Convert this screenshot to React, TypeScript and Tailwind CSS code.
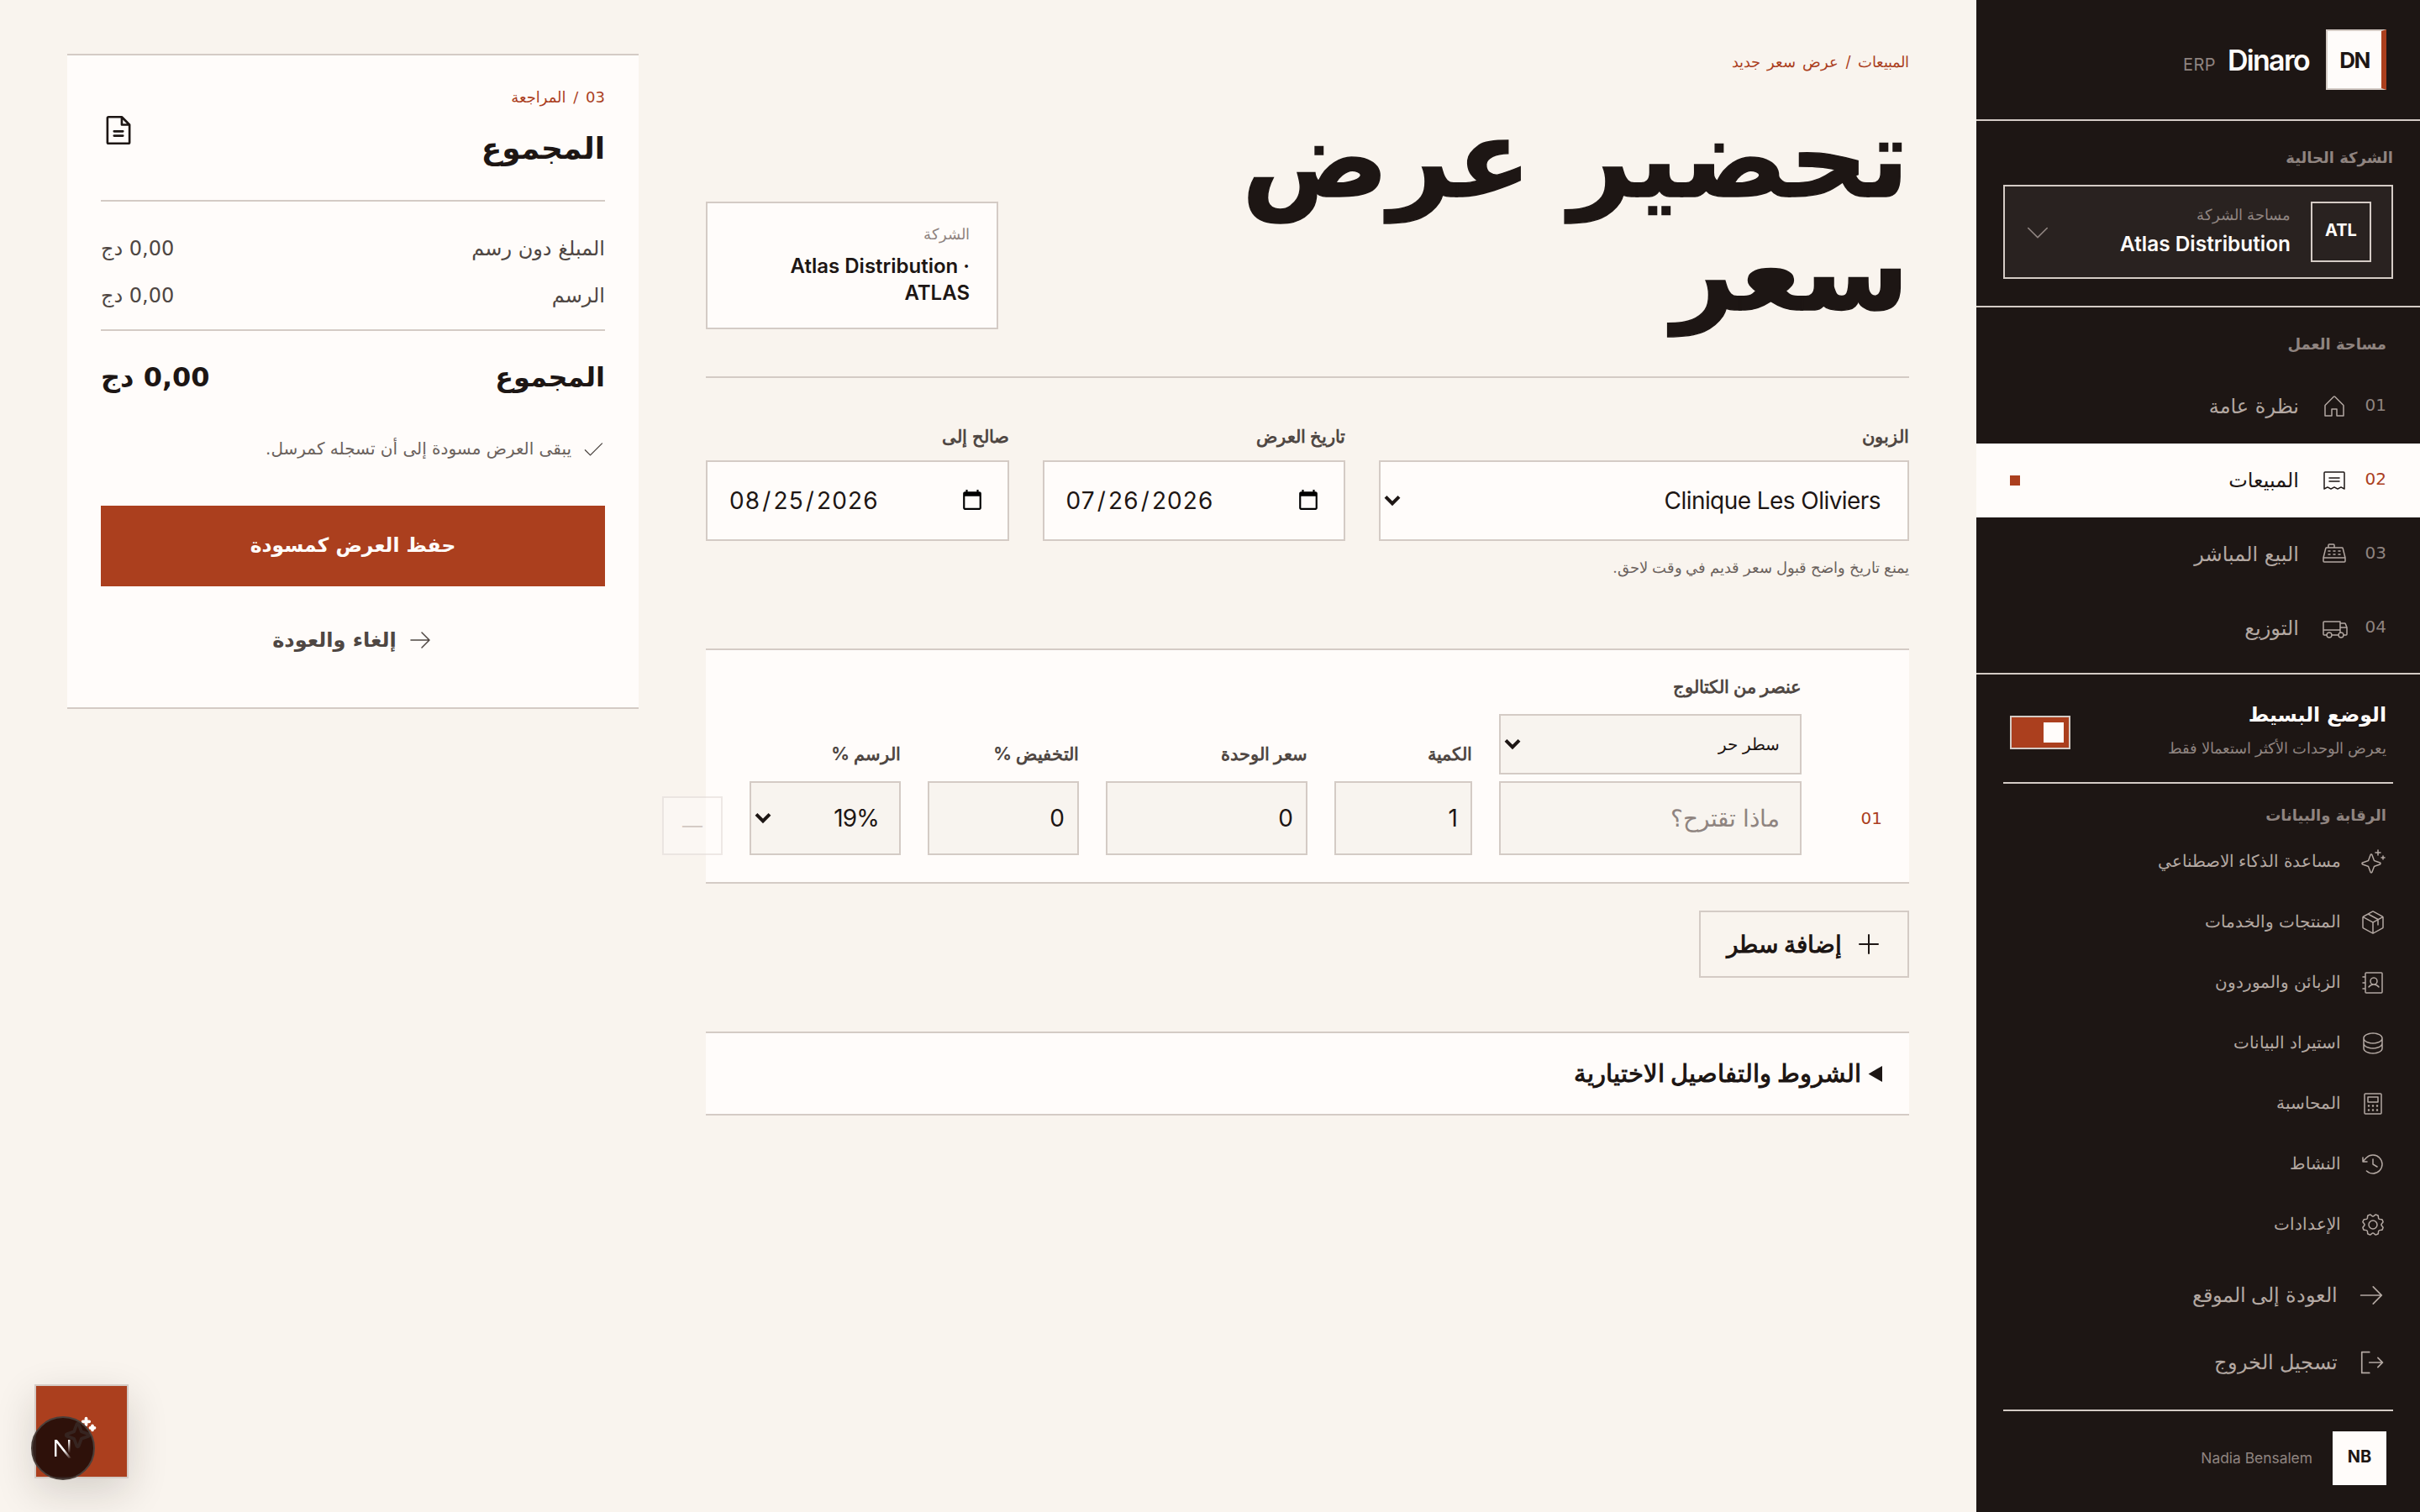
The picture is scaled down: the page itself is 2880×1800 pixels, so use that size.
import {
  PiHouseLight, PiReceiptLight, PiCashRegisterLight, PiTruckLight, PiSparkleLight, PiSparkleBold, PiPackageLight,
  PiAddressBookLight, PiDatabaseLight, PiCalculatorLight, PiClockCounterClockwiseLight, PiGearLight,
  PiArrowRightLight, PiSignOutLight, PiCaretDownLight, PiFileText, PiCheckLight, PiPlus,
} from "react-icons/pi";

const dv = "font-['DejaVu_Sans',sans-serif]";
const fieldLabel = "block text-[10.7px] leading-[13px] font-bold text-[#4f4743] mb-[8px]";
const rowLabel = "block text-[10.7px] leading-[13px] font-bold text-[#4f4743] mb-[10px]";
const topBase = "w-full h-[48px] border border-[#d4cbc5] bg-[#fffcfa] text-[#1d1614] text-[14px]";
const rowField = "w-full h-[44px] border border-[#d4cbc5] bg-[#f8f4ef] text-[#1d1614] text-[14px] tracking-[-0.03em]";

const nav = [
  { n: "01", t: "نظرة عامة", I: PiHouseLight },
  { n: "02", t: "المبيعات", I: PiReceiptLight, active: true },
  { n: "03", t: "البيع المباشر", I: PiCashRegisterLight },
  { n: "04", t: "التوزيع", I: PiTruckLight },
];
const lower = [
  { t: "مساعدة الذكاء الاصطناعي", I: PiSparkleLight },
  { t: "المنتجات والخدمات", I: PiPackageLight },
  { t: "الزبائن والموردون", I: PiAddressBookLight },
  { t: "استيراد البيانات", I: PiDatabaseLight },
  { t: "المحاسبة", I: PiCalculatorLight },
  { t: "النشاط", I: PiClockCounterClockwiseLight },
  { t: "الإعدادات", I: PiGearLight },
];

function Sel({ className, label }: { className: string; label: string }) {
  return (
    <div className="relative">
      <select className={`appearance-none ${className}`}><option>{label}</option></select>
      <svg className="absolute left-[3px] top-1/2 -translate-y-1/2 pointer-events-none" width="10" height="7" viewBox="0 0 10 7" fill="none">
        <path d="M1 1.2 5 5.2 9 1.2" stroke="#1d1614" strokeWidth="2" />
      </svg>
    </div>
  );
}

function Sidebar() {
  return (
    <aside className="w-[264px] h-[900px] shrink-0 bg-[#1d1614] flex flex-col text-[#b3a8a2]">
      <div className="h-[72px] shrink-0 border-b border-[#d4cbc5] flex items-center gap-[10px] pr-[20px]">
        <div className="w-[36px] h-[36px] border border-[#d4cbc5] bg-[#fffcfa] border-r-[3px] border-r-[#ab3f1e] flex items-center justify-center">
          <span dir="ltr" className="text-[13px] font-bold tracking-[-0.06em] text-[#1d1614]">DN</span>
        </div>
        <div dir="ltr" className="flex items-baseline gap-[7px] flex-row-reverse">
          <span className="text-[17px] font-semibold tracking-[-0.05em] text-[#fffcfa]">Dinaro</span>
          <span className="text-[10px] tracking-[0.02em] text-[#8f8480]">ERP</span>
        </div>
      </div>

      <div className="h-[111px] shrink-0 border-b border-[#d4cbc5] px-[16px] pt-[16px]">
        <div className={`${dv} text-[9px] leading-[12px] font-bold text-[#8f8480] mb-[10px]`}>الشركة الحالية</div>
        <div className="h-[56px] border border-[#d4cbc5] bg-[#292220] flex items-center pr-[12px] pl-[10.5px]">
          <div className="w-[36px] h-[36px] border border-[#d4cbc5] flex items-center justify-center shrink-0">
            <span className="text-[10px] font-bold text-[#fffcfa] -translate-y-[1px]">ATL</span>
          </div>
          <div className="flex-1 mr-[12px] min-w-0">
            <div className="text-[8.8px] leading-[14px] text-[#8f8480] -translate-y-[1px]">مساحة الشركة</div>
            <div className="text-[12.2px] leading-[18px] font-semibold text-[#fffcfa]">Atlas Distribution</div>
          </div>
          <PiCaretDownLight size={18} className="text-[#8f8480]" />
        </div>
      </div>

      <div className="h-[37px] shrink-0 flex items-end pr-[20px] pb-[9px]">
        <div className={`${dv} text-[9px] leading-[12px] font-bold text-[#8f8480]`}>مساحة العمل</div>
      </div>
      <nav className="shrink-0">
        {nav.map(({ n, t, I, active }) => (
          <div key={n} className={`h-[44px] flex items-center px-[20px] ${dv} ${active ? "bg-[#fffcfa] text-[#1d1614]" : ""}`}>
            <span className={`w-[11px] text-[10px] leading-[12px] -translate-y-[1px] ${active ? "text-[#ab3f1e]" : "text-[#8f8480]"}`}>{n}</span>
            <I size={16} className="mr-[12px] shrink-0" />
            <span className="mr-[13px] text-[12px]">{t}</span>
            {active && <span className="mr-auto w-[6px] h-[6px] bg-[#ab3f1e]" />}
          </div>
        ))}
      </nav>

      <div className="mt-[4.5px] border-t border-[#d4cbc5] h-[65px] shrink-0 flex items-start justify-between pr-[20px] pl-[20px] pt-[15px]">
        <div>
          <div className={`${dv} text-[11.8px] leading-[18px] font-bold text-[#fffcfa]`}>الوضع البسيط</div>
          <div className="text-[8.8px] leading-[14px] mt-[4px] text-[#8f8480]">يعرض الوحدات الأكثر استعمالا فقط</div>
        </div>
        <div className="w-[36px] h-[20px] mt-[9.5px] border border-[#d4cbc5] bg-[#ab3f1e] flex items-center justify-start pr-[3px]">
          <span className="w-[12px] h-[12px] bg-[#fffcfa]" />
        </div>
      </div>

      <div className="mx-[16px] border-t border-[#d4cbc5] shrink-0" />
      <div className={`${dv} pr-[20px] pt-[13px] h-[28.5px] text-[9px] leading-[12px] font-bold text-[#8f8480] shrink-0`}>الرقابة والبيانات</div>
      <div className="shrink-0">
        {lower.map(({ t, I }) => (
          <div key={t} className="h-[36px] flex items-center pr-[20px] gap-[11px]">
            <I size={16} className="shrink-0" />
            <span className="text-[9.9px]">{t}</span>
          </div>
        ))}
      </div>
      <div className="shrink-0 mt-[4px]">
        <div className="h-[40px] flex items-center pr-[20px] gap-[11px]">
          <PiArrowRightLight size={18} className="shrink-0" />
          <span className="text-[12px]">العودة إلى الموقع</span>
        </div>
        <div className="h-[40px] flex items-center pr-[20px] gap-[11px]">
          <PiSignOutLight size={18} className="shrink-0" />
          <span className="text-[12px]">تسجيل الخروج</span>
        </div>
      </div>
      <div className="mx-[16px] mt-[8px] border-t border-[#d4cbc5] shrink-0" />
      <div className="flex items-center gap-[12px] pr-[20px] pt-[12px] shrink-0">
        <div className="w-[32px] h-[32px] bg-[#fffcfa] flex items-center justify-center">
          <span className="text-[10px] font-bold text-[#1d1614] -translate-y-[1px]">NB</span>
        </div>
        <span className="text-[8.7px] text-[#8f8480]">Nadia Bensalem</span>
      </div>
    </aside>
  );
}

function Summary() {
  return (
    <section className="w-[340px] shrink-0 h-[390px] border-y border-[#d4cbc5] bg-[#fffcfa] px-[20px] pt-[18px] text-[#1d1614] self-start">
      <div className="flex justify-between items-start h-[69px] border-b border-[#d4cbc5]">
        <div>
          <div className={`${dv} text-[9px] leading-[14px] text-[#ab3f1e] [word-spacing:1.5px]`}>03 / المراجعة</div>
          <h2 className={`${dv} mt-[11.5px] text-[18px] leading-[24px] font-bold`}>المجموع</h2>
        </div>
        <PiFileText size={21} className="mt-[16px]" />
      </div>
      <div className={`${dv} text-[12px] text-[#4f4743] border-b border-[#d4cbc5] pt-[14px] h-[77px]`}>
        <div className="flex justify-between h-[28px] items-center"><span>المبلغ دون رسم</span><span>0,00 دج</span></div>
        <div className="flex justify-between h-[28px] items-center"><span>الرسم</span><span>0,00 دج</span></div>
      </div>
      <div className={`${dv} flex justify-between items-center h-[55px] text-[16px] font-bold`}>
        <span>المجموع</span><span>0,00 دج</span>
      </div>
      <div className={`${dv} flex items-center gap-[6px] h-[30px] text-[10px] text-[#6b625d]`}>
        <PiCheckLight size={14} className="text-[#4f4743]" />
        <span>يبقى العرض مسودة إلى أن تسجله كمرسل.</span>
      </div>
      <button className={`${dv} block w-full h-[48px] mt-[19px] bg-[#ab3f1e] text-[#fffcfa] text-[11.7px] font-bold`}>حفظ العرض كمسودة</button>
      <div className={`${dv} flex items-center justify-center gap-[6px] h-[40px] mt-[12px] text-[12px] font-bold text-[#4f4743]`}>
        <PiArrowRightLight size={16} />
        <span>إلغاء والعودة</span>
      </div>
    </section>
  );
}

function Main() {
  return (
    <main className="w-[716px] shrink-0 pt-[29.5px] text-[#1d1614]">
      <div className="text-[9.2px] leading-[14px] text-[#ab3f1e] [word-spacing:1.5px]">المبيعات / عرض سعر جديد</div>
      <div className="flex justify-between items-end h-[181.5px] border-b border-[#d4cbc5] pb-[28px]">
        <h1 className={`${dv} w-[440px] text-[65px] leading-[67.5px] font-bold [-webkit-text-stroke:0.7px_#1d1614]`}>تحضير عرض سعر</h1>
        <div className="w-[174px] h-[76px] border border-[#d4cbc5] bg-[#fffcfa] px-[16px] pt-[11.5px]">
          <div className="text-[9px] leading-[14px] text-[#8f8480]">الشركة</div>
          <div className="mt-[4px] text-[12px] leading-[16px] font-semibold">Atlas Distribution · ATLAS</div>
        </div>
      </div>

      <div className="grid grid-cols-[1.75fr_1fr_1fr] gap-[20px] pt-[28px]">
        <div><span className={fieldLabel}>الزبون</span>
          <Sel className={`${topBase} px-[16px] tracking-[-0.02em]`} label="Clinique Les Oliviers" />
        </div>
        <label><span className={fieldLabel}>تاريخ العرض</span>
          <input dir="ltr" type="date" defaultValue="2026-07-26" className={`${topBase} px-[12px] tracking-[0.04em]`} />
        </label>
        <label><span className={fieldLabel}>صالح إلى</span>
          <input dir="ltr" type="date" defaultValue="2026-08-25" className={`${topBase} px-[12px] tracking-[0.04em]`} />
        </label>
      </div>
      <p className="mt-[9px] text-[8.75px] leading-[14px] text-[#6b625d]">يمنع تاريخ واضح قبول سعر قديم في وقت لاحق.</p>

      <div className="mt-[41px] h-[140px] border-y border-[#d4cbc5] bg-[#fffcfa] pr-[16px] pt-[15px] grid grid-cols-[32px_180px_82px_120px_90px_90px_36px] gap-x-[16px] items-end content-start">
        <div className={`${dv} h-[44px] flex items-center text-[10px] text-[#ab3f1e]`}>01</div>
        <div>
          <span className={rowLabel}>عنصر من الكتالوج</span>
          <Sel className="w-full h-[36px] border border-[#d4cbc5] bg-[#f8f4ef] text-[10px] px-[12px]" label="سطر حر" />
          <input placeholder="ماذا تقترح؟" className={`${rowField} mt-[4px] px-[12px] placeholder:text-[#8f8480]`} />
        </div>
        <label><span className={rowLabel}>الكمية</span><input type="number" defaultValue={1} className={`${rowField} px-[8px]`} /></label>
        <label><span className={rowLabel}>سعر الوحدة</span><input type="number" defaultValue={0} className={`${rowField} px-[8px]`} /></label>
        <label><span className={rowLabel}>التخفيض %</span><input type="number" defaultValue={0} className={`${rowField} px-[8px]`} /></label>
        <div><span className={rowLabel}>الرسم %</span>
          <Sel className={`${rowField} px-[12px]`} label="19%" />
        </div>
        <button className="w-[36px] h-[35px] border border-[#d4cbc5]/40 bg-[#fffcfa]/40 text-[#d4cbc5] text-[12px] flex items-center justify-center">—</button>
      </div>

      <div className="flex mt-[16px]">
        <button className="w-[125px] h-[40px] border border-[#d4cbc5] flex items-center pr-[15px] gap-[8px] text-[14px] font-bold">
          <PiPlus size={16} /><span>إضافة سطر</span>
        </button>
      </div>

      <details className="mt-[32px] h-[50px] border-y border-[#d4cbc5] bg-[#fffcfa] px-[16px]">
        <summary className="h-[48px] leading-[48px] text-[14.5px] font-bold">الشروط والتفاصيل الاختيارية</summary>
      </details>
    </main>
  );
}

function DevBadge() {
  return (
    <div className="absolute left-[20.5px] top-[824px] w-[56px] h-[56px]">
      <div className="absolute inset-0 border border-[#d4cbc5] bg-[#ab3f1e] shadow-[0_8px_24px_rgba(29,22,20,0.16)] flex items-center justify-center text-[#fffcfa]">
        <PiSparkleBold size={20} className="-translate-x-[1px] translate-y-[1px]" />
      </div>
      <div className="absolute left-[-2px] top-[19px] w-[38px] h-[38px] rounded-full bg-[#200c08]/90 border border-[#4a3f3a] flex items-center justify-center">
        <svg width="16" height="16" viewBox="0 0 16 16" fill="none">
          <defs>
            <linearGradient id="nfade" x1="4" y1="3" x2="13" y2="14" gradientUnits="userSpaceOnUse">
              <stop offset="0.55" stopColor="#fff" /><stop offset="1" stopColor="#fff" stopOpacity="0" />
            </linearGradient>
            <linearGradient id="nfade2" x1="11.5" y1="3" x2="11.5" y2="11" gradientUnits="userSpaceOnUse">
              <stop stopColor="#fff" /><stop offset="1" stopColor="#fff" stopOpacity="0" />
            </linearGradient>
          </defs>
          <path d="M3 3h1.4L13 14h-1.6L4.2 4.9V13H3V3Z" fill="url(#nfade)" />
          <rect x="11" y="3" width="1.2" height="8" fill="url(#nfade2)" />
        </svg>
      </div>
    </div>
  );
}

export default function App() {
  return (
    <div className="[zoom:2] relative w-[1440px] h-[900px] overflow-hidden bg-[#f9f4ee] font-['Inter','Noto_Sans',sans-serif]">
      <div dir="rtl" className="flex h-full">
        <Sidebar />
        <div className="flex-1 flex gap-[40px] px-[40px] items-start">
          <Main />
          <div className="pt-[32px]"><Summary /></div>
        </div>
      </div>
      <DevBadge />
    </div>
  );
}
